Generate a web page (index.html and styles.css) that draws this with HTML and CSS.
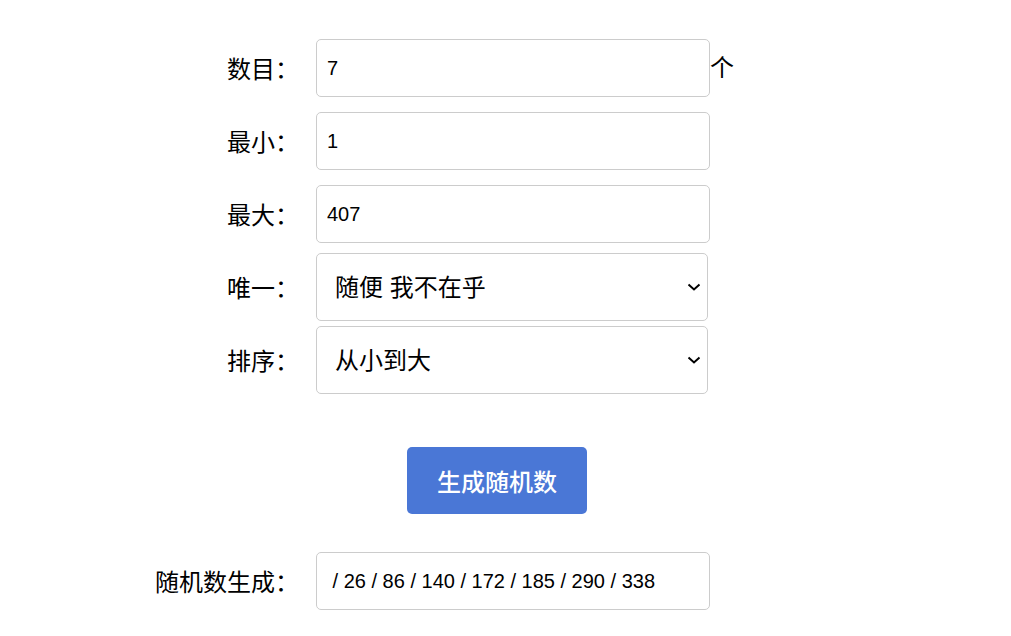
FILE: index.html
```html
<!DOCTYPE html>
<html lang="zh-CN">
<head>
<meta charset="utf-8">
<title>随机数生成器</title>
<link rel="stylesheet" href="styles.css">
</head>
<body>
<form class="form">
  <div class="row">
    <label class="label">数目：</label>
    <input class="field" type="text" value="7">
    <span class="unit">个</span>
  </div>
  <div class="row gap15">
    <label class="label">最小：</label>
    <input class="field" type="text" value="1">
  </div>
  <div class="row gap15">
    <label class="label">最大：</label>
    <input class="field" type="text" value="407">
  </div>
  <div class="row gap10">
    <label class="label">唯一：</label>
    <select class="choice">
      <option>随便 我不在乎</option>
    </select>
  </div>
  <div class="row gap5">
    <label class="label">排序：</label>
    <select class="choice">
      <option>从小到大</option>
    </select>
  </div>
  <div class="row gap53">
    <span class="label"></span>
    <button class="btn" type="button">生成随机数</button>
  </div>
  <div class="row gap38">
    <label class="label">随机数生成：</label>
    <input class="field" type="text" value=" / 26 / 86 / 140 / 172 / 185 / 290 / 338">
  </div>
</form>
</body>
</html>
```

FILE: styles.css
```css
html, body {
  margin: 0;
  padding: 0;
  background: #ffffff;
}
body {
  font-family: "Liberation Sans", "Noto Sans CJK SC", sans-serif;
  color: #000;
}
.form {
  display: flex;
  flex-direction: column;
  padding-top: 39px;
}
.row {
  display: flex;
  align-items: center;
  gap: 17px;
}
.gap15 { margin-top: 15px; }
.gap10 { margin-top: 10px; }
.gap5 { margin-top: 5px; }
.gap53 { margin-top: 53px; }
.gap38 { margin-top: 38px; }
.label {
  width: 299px;
  flex: none;
  text-align: right;
  font-family: "Noto Sans CJK SC", sans-serif;
  font-size: 24px;
  line-height: 30px;
}
.field {
  box-sizing: border-box;
  width: 394px;
  height: 58px;
  margin: 0;
  padding: 0 10px;
  border: 1px solid #cccccc;
  border-radius: 5px;
  font-family: "Liberation Sans", "Noto Sans CJK SC", sans-serif;
  font-size: 20px;
  color: #000;
  background: #fff;
  outline: none;
}
.unit {
  margin-left: -17px;
  font-family: "Noto Sans CJK SC", sans-serif;
  font-size: 24px;
  line-height: 30px;
  align-self: flex-start;
  margin-top: 12px;
}
.choice {
  box-sizing: border-box;
  width: 392px;
  height: 68px;
  margin: 0;
  padding: 0 30px 0 18px;
  border: 1px solid #cccccc;
  border-radius: 5px;
  font-family: "Liberation Sans", "Noto Sans CJK SC", sans-serif;
  font-size: 24px;
  color: #000;
  -webkit-appearance: none;
  appearance: none;
  background-color: #fff;
  background-image: url("data:image/svg+xml,%3Csvg xmlns='http://www.w3.org/2000/svg' width='14' height='8' viewBox='0 0 14 8'%3E%3Cpath d='M1.5 1.5 L7 6.5 L12.5 1.5' fill='none' stroke='%23000' stroke-width='2'/%3E%3C/svg%3E");
  background-repeat: no-repeat;
  background-position: right 6px center;
  outline: none;
}
.btn {
  margin-left: 91px;
  width: 180px;
  height: 67px;
  padding: 0;
  border: none;
  border-radius: 5px;
  background: #4a77d6;
  color: #fff;
  font-family: "Noto Sans CJK SC", sans-serif;
  font-size: 24px;
  font-weight: 500;
}
```
